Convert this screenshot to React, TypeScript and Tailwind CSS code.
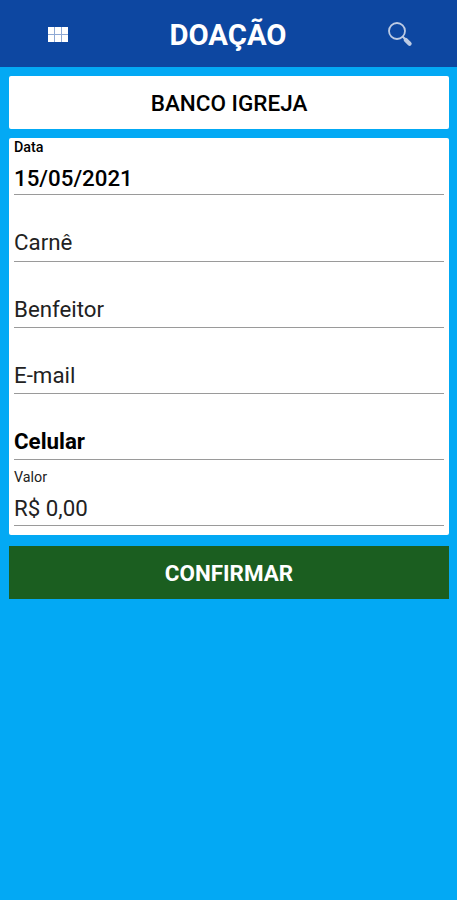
type FieldProps = {
  label: string;
  value?: string;
  weight?: string;
  className?: string;
};

function Field({
  label,
  value,
  weight = 'font-normal text-[#222]',
  className = 'h-[66px] pb-[5px]',
}: FieldProps) {
  return (
    <div className={`flex flex-col justify-end border-b border-[#9a9a9a] ${className}`}>
      {value && <span className={`mb-[9px] text-[14.3px] leading-[18px] ${weight}`}>{label}</span>}
      <span className={`text-[22.3px] leading-[26px] ${weight}`}>{value ?? label}</span>
    </div>
  );
}

export default function App() {
  return (
    <div className="flex h-[900px] w-[457px] flex-col bg-[#03a9f4] font-['Roboto',sans-serif]">
      <header className="flex h-[67px] items-center justify-between bg-[#0d47a1] pt-px pr-[44px] pl-[48px] text-white">
        <svg width="20" height="15" viewBox="0 0 20 15" fill="#fff">
          <path fill="#8fa9d4" d="M0 0h20v15H0z" />
          <path d="M0 0h6v7H0zM7 0h6v7H7zM14 0h6v7h-6zM0 8h6v7H0zM7 8h6v7H7zM14 8h6v7h-6z" />
        </svg>
        <h1 className="pt-[2px] pl-px text-[29.3px] leading-[34px] font-bold">DOAÇÃO</h1>
        <svg width="26" height="26" viewBox="0 0 26 26" fill="none" stroke="#bccbe4" strokeLinecap="round">
          <circle cx="10" cy="10" r="8" strokeWidth="1.8" />
          <path d="M15.8 15.8l3 3" strokeWidth="2" />
          <path d="M18.8 19l3.8 3.8" strokeWidth="4.2" />
        </svg>
      </header>

      <main className="flex flex-col pt-[9px] pr-2 pl-[9px]">
        <div className="flex h-[53px] items-center justify-center rounded-xs bg-white pt-[2px] text-[22.5px] font-medium text-black">
          BANCO IGREJA
        </div>

        <form className="mt-[9px] h-[397px] rounded-xs bg-white px-[5px]">
          <Field label="Data" value="15/05/2021" weight="font-medium text-black" className="h-[57px] pb-[3px]" />
          <Field label="Carnê" className="h-[67px] pb-[6px]" />
          <Field label="Benfeitor" />
          <Field label="E-mail" />
          <Field label="Celular" weight="font-bold text-black" />
          <Field label="Valor" value="R$ 0,00" className="h-[66px] pb-[4px]" />
        </form>

        <button
          type="button"
          className="mt-[11px] flex h-[53px] items-center justify-center bg-[#1b5e20] pt-[2px] text-[22.4px] font-bold text-white"
        >
          CONFIRMAR
        </button>
      </main>
    </div>
  );
}
